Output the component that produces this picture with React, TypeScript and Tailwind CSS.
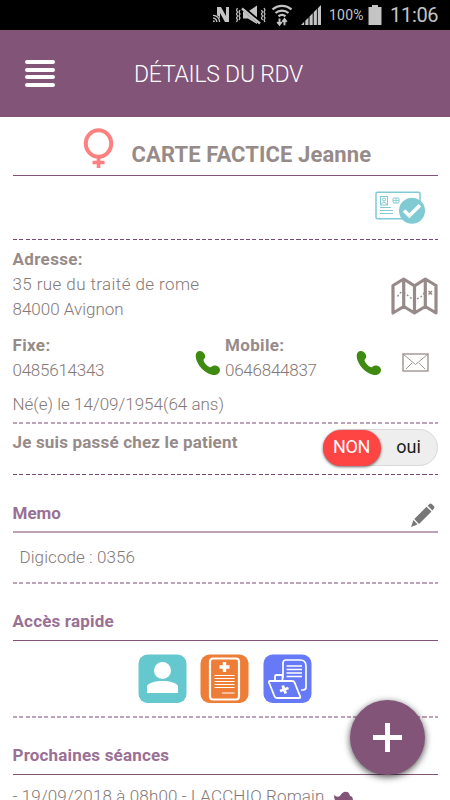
import type { ReactNode } from "react";

const Rule = () => <div className="h-px shrink-0 bg-[#82547a]" />;

const SoftRule = () => <div className="h-[2px] shrink-0 bg-[#bda3b9]" />;

const Dashed = () => (
  <div className="h-px shrink-0 bg-[repeating-linear-gradient(90deg,#7a4872_0px_4px,transparent_4px_6.3px)]" />
);

const SoftDashed = () => (
  <div className="h-[2px] shrink-0 bg-[repeating-linear-gradient(90deg,#bda3b9_0px_4px,transparent_4px_6.3px)]" />
);

const Title = ({ children }: { children: ReactNode }) => (
  <h2 className="text-[17px] leading-[25px] font-bold tracking-[0.18px] text-[#9a7095]">{children}</h2>
);

const Label = ({ children }: { children: ReactNode }) => (
  <p className="font-bold tracking-[0.35px] text-[#978b89]">{children}</p>
);

const StatusBar = () => (
  <div className="flex h-[30px] shrink-0 items-center bg-black pl-[212px] text-[#c4c4c4]">
    {/* NFC */}
    <svg width="18" height="18" viewBox="0 0 18 18" fill="none" stroke="currentColor">
      <path d="M5 1h4l5 9V1h3v15h-4L8 7v9H5z" fill="currentColor" stroke="none" />
      <path d="M0 7.500a9 9 0 0 1 9 9H0z" fill="#000" stroke="none" />
      <path d="M1 9.400a6.400 6.400 0 0 1 6.600 6.600M1 12.200a3.600 3.600 0 0 1 3.800 3.800" strokeWidth="1.300" />
      <circle cx="1.900" cy="15.200" r="0.900" fill="currentColor" stroke="none" />
    </svg>
    {/* vibrate / mute */}
    <svg className="ml-[5px]" width="32" height="20" viewBox="0 0 32 20" fill="none" stroke="currentColor">
      <path
        d="M2.500 3l-1 2 1 2-1 2 1 2-1 2 1 2-1 2M5 5l-1 2 1 2-1 2 1 2-1 2M26.500 5l1 2-1 2 1 2-1 2 1 2M29 3l1 2-1 2 1 2-1 2 1 2-1 2 1 2"
        strokeWidth="1.200"
      />
      <path d="M8 6.500h5l9-6v18.500l-9-5.500H8z" fill="currentColor" stroke="none" />
      <path d="M5 .5l20 17" stroke="#000" strokeWidth="4" />
      <path d="M7 3.500l18 15" strokeWidth="2.300" />
    </svg>
    {/* wifi */}
    <svg className="ml-[4px]" width="22" height="24" viewBox="0 0 22 24" fill="none" stroke="currentColor">
      <path d="M1.500 6.500a14 14 0 0 1 19 0M4.500 10a10 10 0 0 1 13 0M7.500 13.200a6 6 0 0 1 7 0" strokeWidth="2.300" />
      <path d="M8.500 15.500v6M6.300 19l2.200 2.700L10.700 19M13.500 22.300v-6M11.300 18.800l2.200-2.700 2.200 2.700" strokeWidth="1.900" />
    </svg>
    {/* signal */}
    <svg className="ml-[8px]" width="20" height="20" viewBox="0 0 20 20" fill="currentColor">
      <path d="M0 20l3.200-3.200V20zM4.300 15.700l3.200-3.200V20H4.300zM8.500 11.500l3.200-3.200V20H8.500zM12.700 7.300l3.200-3.200V20h-3.200zM16.800 3.200L20 0v20h-3.200z" />
    </svg>
    <span className="ml-[8px] w-[37px] text-[14px] tracking-[0.2px]">100%</span>
    {/* battery */}
    <svg className="ml-[2px]" width="14" height="20" viewBox="0 0 14 20" fill="currentColor">
      <path d="M4 0h6v2h3.500v18H.5V2H4z" />
    </svg>
    <span className="ml-[8px] text-[20px] tracking-[-0.3px]">11:06</span>
  </div>
);

const Phone = () => (
  <svg width="26" height="26" viewBox="0 0 26 26" fill="#3f8a10">
    <path d="M.7 5.500C.7 2.500 3 .8 5 1 8 1.200 10.300 4 10.200 6.800 10.100 8.700 8.300 9.200 8.500 10.200 9.200 13.200 13 16.700 15.500 17.300 16.600 17.500 17.200 15.600 19.500 15.600 22.500 15.600 25 17.600 25 20 24.900 22.800 22.500 25 19.500 25 11 25 .7 14.500 .7 5.500Z" />
  </svg>
);

const CardIcon = () => (
  <svg width="51" height="34" viewBox="0 0 51 34" fill="none" stroke="#7fcad3">
    <rect x="1" y="1.200" width="44" height="26.600" rx="1.500" strokeWidth="1.500" />
    <rect x="5.500" y="5.500" width="7" height="8.500" strokeWidth="1" />
    <circle cx="9" cy="8.500" r="1.500" />
    <path d="M6.500 13.500c0-3 5-3 5 0" />
    <rect x="18" y="7" width="6" height="5" rx="1" />
    <path d="M21 7v5M18 9.500h6" strokeWidth="0.800" />
    <path d="M5 16.500h11M5 19.500h13M5 22.500h13" />
    <circle cx="37" cy="19.800" r="13" fill="#7fcad3" stroke="none" />
    <path d="M29 19.500l5.300 5.300L45 14.300" stroke="#fff" strokeWidth="3.600" />
  </svg>
);

const MapIcon = () => (
  <svg width="47" height="40" viewBox="0 0 47 40" fill="none" stroke="#978b89">
    <path
      d="M2 9.500L12.700 3 23.500 9.800 34.300 3 45 9.500V37l-10.700-6.500L23.500 37l-10.800-6.500L2 37zM12.700 3v27.500M23.500 10v27M34.300 3v27.500"
      strokeWidth="3.200"
      strokeLinejoin="round"
    />
    <path d="M6.500 20.500l3-4 4 .5 9 7 7-2.500 5-6" strokeWidth="1.400" strokeDasharray="2 2" />
    <path d="M37.500 15l3.500 3.500M41 15l-3.500 3.500" strokeWidth="1.600" />
  </svg>
);

const QuickAccess = () => (
  <div className="flex h-[75px] items-start justify-center gap-[13.500px] pt-[13px] pr-[1px]">
    <svg width="49" height="50" viewBox="0 0 49 50" fill="#fff">
      <rect x="0.500" y="0.500" width="48" height="48.500" rx="9" fill="#65c8cf" />
      <circle cx="24.500" cy="16.500" r="8.500" />
      <path d="M9 39v-6.500c0-3.500 9-5.500 15.500-5.500S40 29 40 32.500V39z" />
    </svg>
    <svg width="49" height="50" viewBox="0 0 49 50" fill="none" stroke="#fff">
      <rect x="0.500" y="0.500" width="48" height="48.500" rx="9" fill="#ee7d38" stroke="none" />
      <rect x="10" y="4.500" width="29" height="41" rx="3" strokeWidth="2.200" />
      <path d="M24.500 8v10M19.500 13h10" strokeWidth="3.400" />
      <path d="M14.500 21.500h20M14.500 24.500h20M14.500 27.500h20M14.500 30.500h20M14.500 33.500h20M22 39h12.500" strokeWidth="1.200" />
    </svg>
    <svg width="49" height="50" viewBox="0 0 49 50" fill="none" stroke="#fff" strokeLinejoin="round">
      <rect x="0.500" y="0.500" width="48" height="48.500" rx="9" fill="#667af8" stroke="none" />
      <path d="M20 24V9q0-3 3-3h14q6 0 6 6v21q0 3-3 3h-2" strokeWidth="1.700" />
      <path d="M23.500 12h15.500M23.500 15.500h15.500M23.500 19h15.500M23.500 22.500h15.500" strokeWidth="1.300" />
      <path d="M12 26v-3.500q0-1.500 1.500-1.500h6v5M7 27h22q2 0 2.600 1.500L37 42q1 2-1 2H14q-2 0-2.600-2L6 28.500Q5.500 27 7 27z" strokeWidth="1.800" />
      <path d="M19.700 31.500l3 8M17 37l8.500-3" strokeWidth="2.800" />
    </svg>
  </div>
);

export default function App() {
  return (
    <div className="relative flex h-[800px] w-[450px] flex-col overflow-hidden bg-white font-[Roboto,sans-serif]">
      <StatusBar />

      {/* HEADER */}
      <header className="flex h-[87px] shrink-0 items-center bg-[#825478] pl-[25px]">
        <div className="flex w-[30px] flex-col gap-[3.500px]">
          <span className="h-[4px] rounded-full bg-white" />
          <span className="h-[4px] rounded-full bg-white" />
          <span className="h-[4px] rounded-full bg-white" />
          <span className="h-[4px] rounded-full bg-white" />
        </div>
        <h1 className="ml-[79px] pt-[4px] text-[23px] font-light tracking-[-0.25px] text-white">DÉTAILS DU RDV</h1>
      </header>

      <main className="flex flex-col px-[12.500px]">
        {/* PATIENT */}
        <div className="flex h-[58px] pl-[70px]">
          <svg className="mt-[11px]" width="31" height="41" viewBox="0 0 31 41" fill="none" stroke="#ff8080">
            <ellipse cx="15.500" cy="15.500" rx="12.700" ry="13.300" strokeWidth="4" />
            <path d="M15.500 28.500v11.500M9.500 34.500h12" strokeWidth="3.600" />
          </svg>
          <p className="mt-[25px] ml-[18px] text-[22px] leading-[26px] font-bold tracking-[0.1px] text-[#978b89]">
            CARTE FACTICE Jeanne
          </p>
        </div>
        <Rule />
        <div className="flex h-[63px] justify-end pt-[15px] pr-[12px]">
          <CardIcon />
        </div>
        <Dashed />

        {/* CONTACT */}
        <section className="flex h-[182px] flex-col pt-[7px] text-[17px] leading-[25px] font-light text-[#857876]">
          <div className="flex justify-between">
            <div>
              <Label>Adresse:</Label>
              <p className="tracking-[0.4px]">35 rue du traité de rome</p>
              <p>84000 Avignon</p>
            </div>
            <div className="pt-[29px]">
              <MapIcon />
            </div>
          </div>
          <div className="mt-[11px] flex">
            <div className="w-[182px]">
              <Label>Fixe:</Label>
              <p className="tracking-[-0.25px]">0485614343</p>
            </div>
            <div className="w-[30.500px] pt-[17px]">
              <Phone />
            </div>
            <div className="w-[130.500px]">
              <Label>Mobile:</Label>
              <p className="tracking-[-0.25px]">0646844837</p>
            </div>
            <div className="w-[46px] pt-[17px]">
              <Phone />
            </div>
            <svg className="mt-[20px]" width="27" height="19" viewBox="0 0 27 19" fill="none" stroke="#978b89">
              <rect x="1" y="1" width="25" height="17" strokeWidth="1.300" />
              <path d="M1.500 1.500l12 10 12-10M4 16l6-6M23 16l-6-6" strokeWidth="0.900" />
            </svg>
          </div>
          <p className="mt-[9px]">Né(e) le 14/09/1954(64 ans)</p>
        </section>
        <SoftDashed />

        {/* VISIT TOGGLE */}
        <div className="flex h-[50px] items-start justify-between text-[17px] leading-[25px]">
          <p className="pt-[6px] font-bold tracking-[0.18px] text-[#978b89]">Je suis passé chez le patient</p>
          <div className="mt-[5px] flex h-[37px] w-[115px] rounded-full border border-[#d9d9d9] bg-[#eeeeee] text-[18px] leading-[34px]">
            <span className="-ml-px h-[36px] w-[58px] rounded-full bg-[#ff4444] text-center tracking-[-0.4px] text-white shadow-[0_1px_3px_rgba(0,0,0,0.6)]">
              NON
            </span>
            <span className="flex-1 text-center text-[#1c1c1c]">oui</span>
          </div>
        </div>
        <Dashed />

        {/* MEMO */}
        <div className="flex h-[56px] justify-between pt-[25.500px] pr-[1.500px]">
          <h2 className="text-[17px] leading-[25px] font-bold text-[#9a7095]">Memo</h2>
          <svg className="mt-[1.500px]" width="26" height="26" viewBox="0 0 26 26" fill="#777">
            <path d="M1 25l2.500-7L7.500 22.500zM4.300 17L16.500 4.800l5 4.800L9 22zM17.600 3.800L19.500 2q1-1 2.500.3L23.800 4q1.200 1.300.2 2.400l-1.600 2z" />
          </svg>
        </div>
        <SoftRule />
        <p className="h-[49px] pt-[12px] pl-[7px] text-[17px] leading-[25px] font-light tracking-[0.08px] text-[#857876]">
          Digicode : 0356
        </p>
        <SoftDashed />

        {/* QUICK ACCESS */}
        <div className="h-[56px] pt-[25px]">
          <Title>Accès rapide</Title>
        </div>
        <Rule />
        <QuickAccess />
        <SoftDashed />

        {/* NEXT VISITS */}
        <div className="h-[56px] pt-[25px]">
          <Title>Prochaines séances</Title>
        </div>
        <Rule />
        <div className="flex pt-[9px] text-[17px] leading-[25px] font-light text-[#857876]">
          <p className="tracking-[0.13px] whitespace-nowrap">- 19/09/2018 à 08h00 - LACCHIO Romain</p>
          <svg className="mt-[7px] ml-[9px]" width="20" height="20" viewBox="0 0 20 20" fill="#825478">
            <path d="M0 4q3 3 6 1 3-5 7-4 2 0 3 4 3 0 3 5v8H6q0-5-4-7Q0 8 0 4z" />
          </svg>
        </div>
      </main>

      <button className="absolute top-[700px] left-[350px] flex size-[75px] items-center justify-center rounded-full bg-[#825478] shadow-[0_2px_7px_rgba(0,0,0,0.7)]">
        <svg width="29" height="29" viewBox="0 0 29 29" stroke="#fff" strokeWidth="5">
          <path d="M14.500 0v29M0 14.500h29" />
        </svg>
      </button>
    </div>
  );
}
